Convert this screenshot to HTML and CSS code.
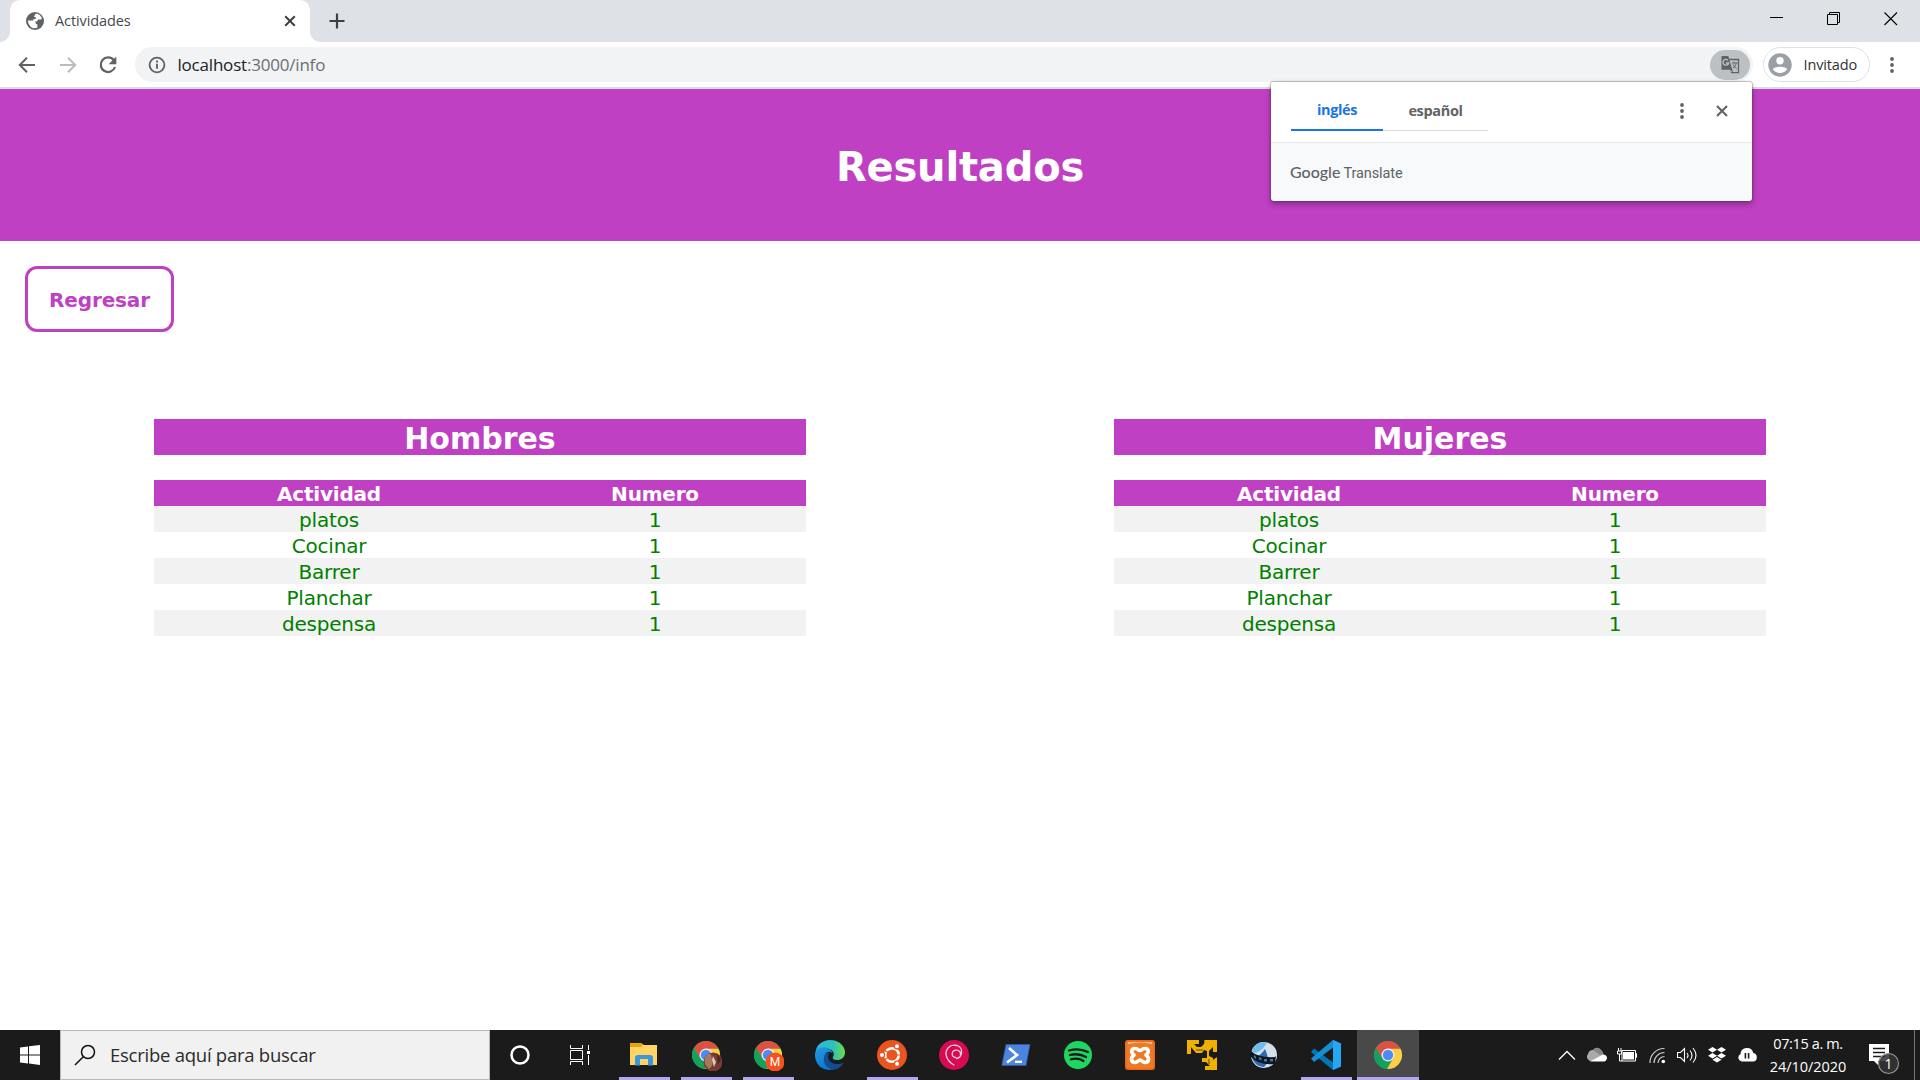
FILE: index.html
```html
<!DOCTYPE html>
<html lang="es">
<head>
<meta charset="utf-8">
<title>Actividades</title>
<link rel="stylesheet" href="styles.css">
</head>
<body>
<div class="screen">
  <header class="tabstrip">
    <div class="tab">
      <svg class="tab-globe" width="20" height="20" viewBox="0 0 20 20"><circle cx="10" cy="10" r="9" fill="#5f6368"/><path d="M2.800 9.500h5.700l2.300 2v1.800h1.600v3.200q-3.500 1.500-6.500-.6-2.800-2.300-3.100-6.400zM10.500 2.800h2.200q3 1.200 4.200 4.200l-.8 1.500h-3l-1 2H8.500V8h2.200V6H9z" fill="#fff"/></svg>
      <span class="tab-title">Actividades</span>
      <svg class="tab-close" width="12" height="12" viewBox="0 0 12 12"><path d="M1.200 1.200l9.600 9.600M10.800 1.200l-9.600 9.600" stroke="#3c4043" stroke-width="2"/></svg>
    </div>
    <svg class="tab-new" width="16" height="16" viewBox="0 0 16 16"><path d="M8 .5v15M.5 8h15" stroke="#3c4043" stroke-width="2.200"/></svg>
    <div class="window-controls">
      <svg width="14" height="14" viewBox="0 0 14 14"><path d="M0 5.500h13" stroke="#000"/></svg>
      <svg width="14" height="14" viewBox="0 0 14 14" fill="none" stroke="#000"><path d="M.5 2.500h10v10H.5zM2.500 2.500v-2h10v10h-2"/></svg>
      <svg width="14" height="14" viewBox="0 0 14 14"><path d="M.5.500l12.500 12.500M13 .5L.5 13" stroke="#000" stroke-width="1.100"/></svg>
    </div>
  </header>

  <nav class="toolbar">
    <svg class="nav-icon" width="20" height="20" viewBox="0 0 20 20"><path d="M18 10H3.500M10 2.800L2.800 10l7.200 7.200" fill="none" stroke="#5f6368" stroke-width="2"/></svg>
    <svg class="nav-icon" width="20" height="20" viewBox="0 0 20 20"><path d="M2 10h14.500M10 2.800l7.200 7.200-7.200 7.200" fill="none" stroke="#babcbe" stroke-width="2"/></svg>
    <svg class="nav-icon" width="20" height="20" viewBox="0 0 20 20"><path d="M15.800 5.200A7.300 7.300 0 1 0 17 12" fill="none" stroke="#5f6368" stroke-width="2.200"/><path d="M18.300 1.500v7.700h-7.700z" fill="#5f6368"/></svg>
    <div class="omnibox">
      <svg width="18" height="18" viewBox="0 0 18 18"><circle cx="9" cy="9" r="7.400" fill="none" stroke="#5f6368" stroke-width="1.800"/><path d="M9 7.800v5M9 4.600v1.900" stroke="#5f6368" stroke-width="1.900"/></svg>
      <span class="url"><span class="url-host">localhost</span>:3000/info</span>
      <div class="translate-pill">
        <svg width="20" height="20" viewBox="0 0 20 20"><path d="M8 4.500h10.500v13.200h-7.500" fill="none" stroke="#5f6368" stroke-width="1.300"/><path d="M1.500 1h6.800l3.800 13.300 1 4-3.200-3.500H1.500z" fill="#5f6368"/><path d="M8 5.300A2.900 2.900 0 1 0 8.700 8H5.900" fill="none" stroke="#bdc0c3" stroke-width="1.300"/><path d="M11.800 8h5.700M14.300 6.800V8M16.300 8c-.5 2.400-1.700 4-3.500 5.300M13 9.300c.9 2 2 3.300 3.700 4.500" fill="none" stroke="#5f6368"/></svg>
      </div>
    </div>
    <div class="profile">
      <svg width="24" height="24" viewBox="0 0 24 24"><circle cx="12" cy="12" r="11.700" fill="#9aa0a6"/><circle cx="12" cy="7.800" r="3.700" fill="#fff"/><path d="M4.800 16.500C6 12.700 18 12.700 19.200 16.500 15.800 21 8.200 21 4.800 16.500z" fill="#fff"/></svg>
      <span class="profile-name">Invitado</span>
    </div>
    <svg class="menu-dots" width="6" height="20" viewBox="0 0 6 20" fill="#5f6368"><circle cx="3" cy="4" r="1.900"/><circle cx="3" cy="10" r="1.900"/><circle cx="3" cy="16" r="1.900"/></svg>
  </nav>

  <main class="page">
    <div class="banner"><h1>Resultados</h1></div>
    <a class="back-button">Regresar</a>
    <div class="columns">
      <section class="group">
        <h2>Hombres</h2>
        <table>
          <tr><th>Actividad</th><th>Numero</th></tr>
          <tr><td>platos</td><td>1</td></tr>
          <tr><td>Cocinar</td><td>1</td></tr>
          <tr><td>Barrer</td><td>1</td></tr>
          <tr><td>Planchar</td><td>1</td></tr>
          <tr><td>despensa</td><td>1</td></tr>
        </table>
      </section>
      <section class="group">
        <h2>Mujeres</h2>
        <table>
          <tr><th>Actividad</th><th>Numero</th></tr>
          <tr><td>platos</td><td>1</td></tr>
          <tr><td>Cocinar</td><td>1</td></tr>
          <tr><td>Barrer</td><td>1</td></tr>
          <tr><td>Planchar</td><td>1</td></tr>
          <tr><td>despensa</td><td>1</td></tr>
        </table>
      </section>
    </div>
  </main>

  <footer class="taskbar">
    <div class="start">
      <svg width="20" height="20" viewBox="0 0 20 20" fill="#fff"><path d="M0 2.500L8 1.400v8H0zM9 1.200L20 0v9.400H9zM0 10.400h8v8l-8-1zM9 10.400h11V20L9 18.600z"/></svg>
    </div>
    <div class="search">
      <svg width="22" height="22" viewBox="0 0 22 22"><circle cx="14" cy="8" r="6.500" fill="none" stroke="#111" stroke-width="1.500"/><path d="M9.300 12.700L1 21" stroke="#111" stroke-width="1.500"/></svg>
      <span class="search-text">Escribe aquí para buscar</span>
    </div>
    <div class="system-buttons">
      <div class="system-button"><svg width="22" height="22" viewBox="0 0 22 22"><circle cx="11" cy="11" r="8.500" fill="none" stroke="#fff" stroke-width="2.500"/></svg></div>
      <div class="system-button"><svg width="20" height="20" viewBox="0 0 20 20" fill="none" stroke="#fff"><path d="M.5 0v3.500h12V0M.5 5.500h12v9H.5zM.5 20v-3.500h12V20M18.500 0v5M18.500 10v10"/><path d="M17 6h3v3h-3z" fill="#fff" stroke="none"/></svg></div>
    </div>
    <div class="apps">
      <div class="app running"><svg width="30" height="30" viewBox="0 0 30 30"><path d="M1 3h11l3 2h13v20H1z" fill="#ffd463"/><path d="M1 3h11l2 1.500-2 2.500H1z" fill="#e5a50a"/><path d="M6 25.500V18q0-3 3-3h12q3 0 3 3v7.500h-5V19h-8v6.500z" fill="#3a96dd"/></svg></div>
      <div class="app running"><svg width="32" height="32" viewBox="0 0 32 32"><use href="#chrome-mark" x="1" y="1"/><circle cx="23" cy="23" r="9.500" fill="#753d32"/><path d="M15 18q6-8 7 2 2 7-3 10-6-5-4-12z" fill="#a7775f"/><path d="M23 17l3 6-2 5-2-7z" fill="#e2c8bf"/><path d="M27 15l4 5-3 6z" fill="#4d2720"/></svg></div>
      <div class="app running"><svg width="32" height="32" viewBox="0 0 32 32"><use href="#chrome-mark" x="1" y="1"/><circle cx="23" cy="23" r="9.500" fill="#f4511e"/><text class="badge-letter" x="23" y="27.200">M</text></svg></div>
      <div class="app"><svg width="30" height="30" viewBox="0 0 30 30"><defs><linearGradient id="edge-top"><stop offset="0" stop-color="#2eb4ef"/><stop offset=".6" stop-color="#2cc3b7"/><stop offset="1" stop-color="#70dc43"/></linearGradient><linearGradient id="edge-side" x1="0" y1="0" x2=".5" y2="1"><stop offset="0" stop-color="#249bd9"/><stop offset="1" stop-color="#0876d6"/></linearGradient></defs><path d="M.5 13C1 5 7.500 0 15 0c9 0 15 6 15 12.500 0 5-4 7.500-8 7.500-3 0-5-1.300-4-3 2-3 .5-7-5-8.500C7 7 2 9.500.5 13z" fill="url(#edge-top)"/><path d="M0 15C0 10 4 7 9 7.200c5 .3 8.500 3.300 8.500 6.600-1-2-4-3-6-1-3.500 3.500-.5 10 5 12.200 3 1.500 5 2 4 3.500C10 33 0 26 0 15z" fill="url(#edge-side)"/><path d="M10.500 14c-4 6-.5 14 7 15.700 5 .3 9-3.300 11-7.200-6 3-13 1.500-15-3.500-.7-2-.5-4 1-6-1.700-1.200-3-.5-4 1z" fill="#124d91"/></svg></div>
      <div class="app running"><svg width="30" height="30" viewBox="0 0 30 30"><circle cx="15" cy="15" r="15" fill="#e95420"/><circle cx="15" cy="15" r="6.800" fill="none" stroke="#fff" stroke-width="2.600"/><path d="M15 15L7 10M15 15l-8 5M15 15h9" stroke="#e95420" stroke-width="1.200"/><g stroke="#e95420" stroke-width="1.200" fill="#fff"><circle cx="5" cy="15" r="2.600"/><circle cx="20" cy="6.300" r="2.600"/><circle cx="20" cy="23.700" r="2.600"/></g></svg></div>
      <div class="app"><svg width="30" height="30" viewBox="0 0 30 30"><circle cx="15" cy="15" r="15" fill="#d70a53"/><path d="M16.500 17.500c-5-1-4-7.500 1-7.300 5 .4 6 8-.5 8.300 7-.5 7.500-11 1-13C10.500 3.500 5.500 10 7.500 16.500c1.200 3.800 4 6.500 7.500 8.500" fill="none" stroke="#f8d3e0" stroke-width="1.300" stroke-linecap="round"/></svg></div>
      <div class="app"><svg width="30" height="30" viewBox="0 0 30 30"><path d="M5 4.500h24L25 25.500H.8z" fill="#4d84e0" stroke="#315b9c" stroke-width=".7"/><path d="M8 8l8 7-10 7.500" fill="none" stroke="#fff" stroke-width="2.600"/><path d="M14 21.800h7" stroke="#fff" stroke-width="2.300"/></svg></div>
      <div class="app"><svg width="30" height="30" viewBox="0 0 30 30"><circle cx="15" cy="15" r="14" fill="#1ed760"/><path d="M6 10.500q10-3 19 1.500M7 15q8.500-2.200 16 2M8 19.300q7-1.800 12.500 1.700" fill="none" stroke="#1b1b1b" stroke-width="2.300" stroke-linecap="round"/></svg></div>
      <div class="app"><svg width="30" height="30" viewBox="0 0 30 30"><rect width="30" height="30" rx="3" fill="#e76818"/><rect x="1.500" y="1.500" width="27" height="27" rx="2" fill="#f07a24"/><path d="M3 4q12-3 24 0V2H3z" fill="#f8bf92"/><path d="M10.500 8.500c-4.500-.5-5 4-1.500 6.500-4 3-3 7.500 1 7.500 3 0 3-2.500 5-2.500s2 2.500 5 2.500c4 0 5-4.500 1-7.500 3.500-2.500 3-7-1.500-6.500-2.500 0-2.500 2-4.500 2s-2-2-4.500-2z" fill="none" stroke="#fff" stroke-width="3.600" stroke-linejoin="round"/></svg></div>
      <div class="app"><svg width="30" height="30" viewBox="0 0 30 30"><path d="M0 0h12v4H7l3 3h4l3-3V0h2v5h0V0h11v12h-4V7l-4 4v5l4 2v5l0-3 4-3v13H18v-4h5l-4-4h-4v-4h5v-7l-3-1-2 3H9L4 7v7H0z" fill="#efb100"/><path d="M13 0h4v3h-4zM22 19v5M9 10h7" fill="#1b1b1b" stroke="#1b1b1b" stroke-width=".7"/></svg></div>
      <div class="app"><svg width="30" height="30" viewBox="0 0 30 30"><circle cx="15" cy="15" r="13" fill="#d5e0e8"/><path d="M3 11C5 4 12 0 18 3c-3 4-5 8-12 10z" fill="#72bce9"/><path d="M3 18c7-1 10-5 13-9 3 7 5 13-1 18-6 0-10-4-12-9z" fill="#2d69b5"/><path d="M2 11q7 7 24 6l1-1-1 8q-16 2-25-8z" fill="#0b1825"/><path d="M5 15l2 1.500V19l-2-1.500zM10 17l2.500 1v2.500l-2.500-1zM15 19h3v2.500h-3zM21 19h3v2.500h-3z" fill="#557184"/></svg></div>
      <div class="app running"><svg width="30" height="30" viewBox="0 0 30 30"><path d="M22 0l8 3.500v23L22 30 0 12l3-3.500 19 14z" fill="#0078b8"/><path d="M22 0L0 18.500 3 22 22 7.500z" fill="#168ed2"/><path d="M22 0l8 3.500v23L22 30z" fill="#25a8f4"/></svg></div>
      <div class="app running active"><svg width="30" height="30" viewBox="0 0 30 30"><g id="chrome-mark"><circle cx="15" cy="15" r="14" fill="#34a853"/><path d="M2.900 8A14 14 0 0 1 27.100 8L15 15 9.500 18z" fill="#dd5144"/><path d="M15 8.700h12.500A14 14 0 0 1 14 29l6.500-11z" fill="#ffcd46"/><path d="M2.900 8l6.600 11.500 8 1.500L14 29A14 14 0 0 1 2.900 8z" fill="#16a05d"/><circle cx="15" cy="15" r="6.500" fill="#f1f1f1"/><circle cx="15" cy="15" r="5.200" fill="#4c8bf5"/></g></svg></div>
    </div>
    <div class="tray">
      <svg width="20" height="20" viewBox="0 0 20 20"><path d="M2 14.500L10 6.500l8 8" fill="none" stroke="#fff" stroke-width="1.300"/></svg>
      <svg width="20" height="20" viewBox="0 0 20 20"><path d="M1 9q1-4 5-4 4-5 9 1l2 4-9 6H3q-5-3-2-7z" fill="#aaa"/><path d="M3 16.500L15 10q5-1 5 3.500-1 3-3 3z" fill="#fff"/><path d="M6 5q4-5 9 1l1 3-3 1z" fill="#888"/></svg>
      <svg width="20" height="20" viewBox="0 0 20 20"><path d="M5 5.500h13.500v10.500H5zM18.500 8.500h1v4h-1M1.500 3v3M4 3v3M.5 6h4v3h-4zM2.500 9v7H5" fill="none" stroke="#fff"/><path d="M6 7h11v7.500H6z" fill="#fff"/></svg>
      <svg width="20" height="20" viewBox="0 0 20 20"><g fill="none" stroke="#ccc" stroke-width="1.200"><path d="M3 18A14 14 0 0 1 17.500 3.500"/><path d="M7 18A10.500 10.500 0 0 1 17.500 7.500"/><path d="M11 18A6.500 6.500 0 0 1 17.500 11.500"/></g><circle cx="16.300" cy="16.500" r="1.800" fill="#fff"/></svg>
      <svg width="20" height="20" viewBox="0 0 20 20" fill="none" stroke="#fff" stroke-width="1.100"><path d="M.5 7.500h3l4-4v13l-4-4h-3zM10 8q2 2.500 0 5M13 5.500q4 5 0 10M16 3q6 7.500 0 14.500"/></svg>
      <svg width="20" height="20" viewBox="0 0 20 20" fill="#fff"><path d="M5.500 2L10 4.800 5.500 7.600 1 4.800zM14.500 2L19 4.800l-4.500 2.800L10 4.800zM5.500 8L10 10.800l-4.500 2.800L1 10.800zM14.500 8l4.500 2.800-4.500 2.800-4.500-2.800zM5.500 14.700L10 12l4.500 2.700L10 17.500z"/></svg>
      <svg width="20" height="20" viewBox="0 0 20 20"><path d="M4.500 16.500A4 4 0 0 1 3.500 9a6.500 6.500 0 0 1 12.800-1A4.300 4.300 0 0 1 16 16.500z" fill="#fff"/><path d="M8.400 8v5.500M11.600 8v5.500" stroke="#1b1b1b" stroke-width="1.600"/></svg>
    </div>
    <div class="clock"><span class="time">07:15 a. m.</span><span class="date">24/10/2020</span></div>
    <div class="notifications">
      <svg width="32" height="32" viewBox="0 0 32 32"><path d="M1 1h20v17H10v4l-4-4H1z" fill="#fff"/><path d="M5 5.500h12M5 9.500h12M5 13.500h12" stroke="#1b1b1b" stroke-width="1.300"/><circle cx="20.500" cy="20.500" r="10" fill="#333" fill-opacity=".88" stroke="#999" stroke-width="1.100"/><text class="notification-count" x="20.500" y="26">1</text></svg>
    </div>
    <div class="show-desktop"></div>
  </footer>

  <aside class="translate-popup">
    <div class="popup-head">
      <div class="popup-tab selected"><span class="lang-from">inglés</span></div>
      <div class="popup-tab"><span class="lang-to">español</span></div>
      <svg class="popup-dots" width="6" height="20" viewBox="0 0 6 20" fill="#5f6368"><circle cx="3" cy="4" r="1.900"/><circle cx="3" cy="10" r="1.900"/><circle cx="3" cy="16" r="1.900"/></svg>
      <svg class="popup-close" width="12" height="12" viewBox="0 0 12 12"><path d="M1 1l10 10M11 1L1 11" stroke="#5f6368" stroke-width="2.100"/></svg>
    </div>
    <div class="popup-foot"><span class="brand">Google</span><span class="brand-product">Translate</span></div>
  </aside>
</div>
</body>
</html>
```

FILE: styles.css
```css
* { box-sizing: border-box; }
body { margin: 0; background: #fff; font-family: "Open Sans", "Noto Sans", sans-serif; }
svg { display: block; flex: none; }
span { white-space: nowrap; }
.screen { position: relative; display: flex; flex-direction: column; width: 1920px; height: 1080px; overflow: hidden; }

/* Browser frame */
.tabstrip { display: flex; height: 42px; padding-left: 10px; background: #dee1e6; }
.tab { position: relative; display: flex; align-items: center; width: 300px; height: 42px; padding-left: 15px; background: #fff; border-radius: 10px 10px 0 0; }
.tab::before, .tab::after { content: ""; position: absolute; bottom: 0; width: 10px; height: 10px; }
.tab::before { left: -10px; background: radial-gradient(circle at 0 0, #dee1e6 9.5px, #fff 10px); }
.tab::after { right: -10px; background: radial-gradient(circle at 100% 0, #dee1e6 9.5px, #fff 10px); }
.tab-title { margin: 0 0 2px 10px; color: #45494d; font-size: 14.5px; letter-spacing: -0.1px; }
.tab-close { margin-left: auto; margin-right: 14px; }
.tab-new { margin: 13px 0 0 19px; }
.window-controls { display: flex; gap: 43px; margin: 12px 22px 0 auto; }
.toolbar { display: flex; align-items: center; height: 47px; padding: 0 25px 0 17px; border-bottom: 2px solid #d9dbdf; }
.nav-icon { margin-right: 20.500px; }
.omnibox { display: flex; align-items: center; width: 1618px; height: 35px; margin-left: -4px; padding: 0 3px 0 13px; background: #f1f3f4; border-radius: 18px; }
.url { margin-left: 12px; color: #6b6f73; font-size: 17px; letter-spacing: -0.2px; }
.url-host { color: #202124; }
.translate-pill { display: flex; align-items: center; justify-content: center; width: 40px; height: 30px; margin-left: auto; background: #bdc0c3; border-radius: 15px; }
.profile { display: flex; align-items: center; width: 107px; height: 35px; margin-left: 10px; padding-left: 4px; border: 1px solid #dfe1e4; border-radius: 18px; }
.profile-name { margin-left: 12px; color: #303236; font-size: 14.5px; letter-spacing: -0.15px; }
.menu-dots { margin-left: auto; }

/* Page */
.page { flex: 1; font-family: "DejaVu Sans", Verdana, sans-serif; }
.banner { display: flex; align-items: center; justify-content: center; height: 152px; padding-top: 3px; background: #c040c4; color: #fff; }
.banner h1 { margin: 0; font-size: 40px; line-height: 48px; letter-spacing: -0.18px; }
.back-button { display: flex; align-items: center; justify-content: center; width: 149px; height: 66px; margin: 25px 0 0 25px; padding-top: 1px; border: 3px solid #c040c4; border-radius: 12px; color: #c040c4; font-size: 20px; font-weight: bold; letter-spacing: -0.15px; }
.columns { display: flex; gap: 308px; padding: 87px 154px 0; }
.group { width: 652px; }
.group h2 { height: 36px; margin: 0 0 25px; background: #c040c4; color: #fff; font-size: 30px; line-height: 40px; text-align: center; }
.group table { width: 652px; border-collapse: collapse; table-layout: fixed; font-size: 20px; line-height: 24px; text-align: center; color: #008000; }
.group tr { height: 26px; }
.group tr:nth-child(even) { background: #f2f2f2; }
.group td, .group th { padding: 2px 0 0; letter-spacing: -0.2px; }
.group th { background: #c040c4; color: #fff; }
.group th:first-child { width: 350px; }

/* Translation bubble over the page */
.translate-popup { position: absolute; left: 1271px; top: 82px; width: 481px; height: 119px; background: #f8f9fa; border-radius: 3px; box-shadow: 0 0 1px 1px rgba(60,60,60,.3), 0 3px 6px rgba(0,0,0,.35); overflow: visible; }
.popup-head { display: flex; align-items: center; height: 61px; padding: 0 24px 2px 20px; background: #fff; border-bottom: 1px solid #e6e8eb; border-radius: 3px 3px 0 0; }
.popup-tab { display: flex; align-items: center; justify-content: center; width: 105px; height: 40px; padding-bottom: 1px; border-bottom: 1px solid #dadce0; color: #5f6368; font-size: 14.5px; font-weight: bold; }
.popup-tab.selected { width: 92px; border-bottom: 2px solid #1a73e8; color: #1a73e8; }
.lang-from, .lang-to { letter-spacing: -0.35px; }
.popup-dots { margin-left: auto; }
.popup-close { margin-left: 31px; }
.popup-foot { display: flex; align-items: baseline; gap: 3px; height: 58px; padding: 19px 0 0 19px; color: #5f6368; font-size: 15px; line-height: 20px; }
.brand { font-family: Lato, sans-serif; font-size: 16px; font-weight: 500; letter-spacing: 0; }
.brand-product { font-family: Roboto, sans-serif; font-size: 14.500px; letter-spacing: -0.1px; }

/* Taskbar */
.taskbar { display: flex; height: 50px; background: #1b1b1b; color: #fff; }
.start { display: flex; align-items: center; justify-content: center; width: 60px; }
.search { display: flex; align-items: center; width: 430px; padding-left: 13px; border: 1px solid #b8b8b8; background: #f1f1f1; color: #2b2b2b; }
.search-text { margin: 0 0 2px 14px; font-size: 18.500px; letter-spacing: -0.25px; }
.system-buttons { display: flex; width: 123px; }
.system-button { display: flex; align-items: center; justify-content: center; width: 60px; }
.apps { display: flex; }
.app { display: flex; align-items: center; justify-content: center; width: 62px; background: no-repeat 6px 47px / 51px 3px; }
.app.running { background-image: linear-gradient(#b2a7f0, #b2a7f0); }
.app.active { background-color: #494949; background-position: 0 47px; background-size: 62px 3px; }
.badge-letter { fill: #fff; font: 12px Roboto, sans-serif; text-anchor: middle; }
.tray { display: flex; align-items: center; gap: 10px; margin-left: auto; padding: 0 5px; }
.clock { display: flex; flex-direction: column; align-items: center; width: 92px; font-size: 14.500px; line-height: 23px; padding-top: 2px; }
.time { letter-spacing: -0.38px; }
.date { letter-spacing: -0.05px; }
.notifications { display: flex; align-items: center; width: 60px; padding: 7px 0 0 14px; }
.notification-count { fill: #fff; font: 14px "Open Sans", sans-serif; text-anchor: middle; }
.show-desktop { width: 6px; border-left: 1px solid #777; }
```
